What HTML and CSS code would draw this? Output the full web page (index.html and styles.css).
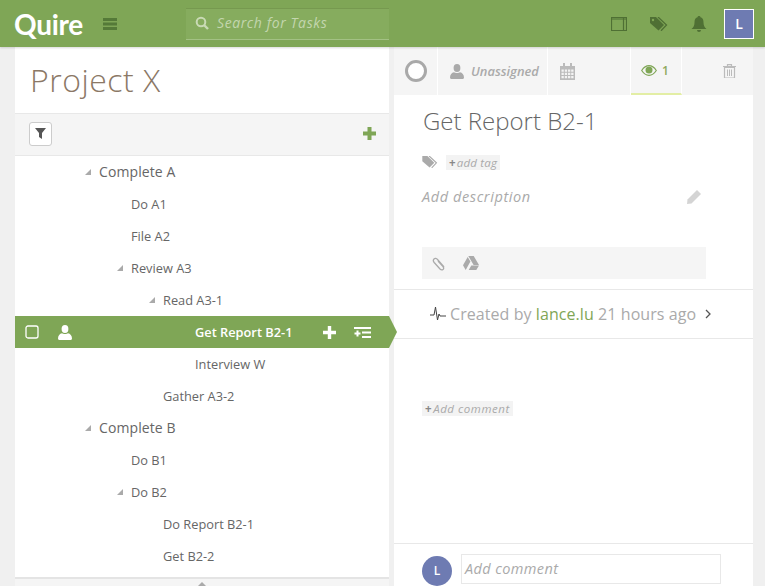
FILE: index.html
```html
<!DOCTYPE html>
<html lang="en">
<head>
  <meta charset="UTF-8">
  <title>Quire - Project X</title>
  <link rel="stylesheet" href="styles.css">
</head>
<body>
  <!-- Top bar -->
  <header class="topbar">
    <div class="logo">Quire</div>
    <svg class="menu-icon" width="14" height="12" viewBox="0 0 14 12"><path d="M0 0h14v3H0zM0 4.500h14v3H0zM0 9h14v3H0z" fill="#557a38"/></svg>
    <div class="search">
      <svg width="14" height="14" viewBox="0 0 14 14"><circle cx="6" cy="6" r="4.300" fill="none" stroke="#c9dab5" stroke-width="2"/><path d="M9 9l4 4" stroke="#c9dab5" stroke-width="2.400"/></svg>
      <span>Search for Tasks</span>
    </div>
    <div class="top-icons">
      <svg width="16" height="14" viewBox="0 0 16 14"><path d="M.5.500h15v13H.5zM12.500.500v13M.5 2h15" fill="none" stroke="#4f7034" stroke-width="1.200"/></svg>
      <svg width="18" height="14" viewBox="0 0 18 14"><path d="M0 0h6l8 8-5.500 5.500L0 6z" fill="#4f7034"/><path d="M8 0l8.500 8-5.500 5.800" fill="none" stroke="#4f7034" stroke-width="1.300"/><circle cx="3" cy="3" r="1.200" fill="#7fa656"/></svg>
      <svg width="16" height="16" viewBox="0 0 16 16"><path d="M8 0c1 0 1.500.6 1.500 1.300C12 2 12.500 4 12.500 6.500c0 3 1 5 3 6.500H.5c2-1.500 3-3.500 3-6.500C3.500 4 4 2 6.500 1.300 6.500.6 7 0 8 0zM6 14h4a2 2 0 0 1-4 0z" fill="#4f7034"/></svg>
      <div class="top-avatar">L</div>
    </div>
  </header>

  <main class="content">
    <!-- Task tree -->
    <section class="tree-panel">
      <h1 class="project-title">Project X</h1>
      <div class="tree-toolbar">
        <button class="filter-btn">
          <svg width="11" height="11" viewBox="0 0 11 11"><path d="M0 0h11L7 5v6L4 9V5z" fill="#555"/></svg>
        </button>
        <svg width="13" height="13" viewBox="0 0 13 13"><path d="M4.500 0h4v4.500H13v4H8.500V13h-4V8.500H0v-4h4.500z" fill="#7fa656"/></svg>
      </div>
      <ul class="tree">
        <li class="row depth-1 open">Complete A</li>
        <li class="row depth-2">Do A1</li>
        <li class="row depth-2">File A2</li>
        <li class="row depth-2 open">Review A3</li>
        <li class="row depth-3 open">Read A3-1</li>
        <li class="row selected">
          <svg class="sel-check" width="14" height="14" viewBox="0 0 14 14"><rect x="1" y="1" width="12" height="12" rx="2" fill="none" stroke="#fff" stroke-width="1.300"/></svg>
          <svg class="sel-user" width="14" height="15" viewBox="0 0 14 15"><ellipse cx="7" cy="4" rx="3.400" ry="4" fill="#fff"/><path d="M0 13.500c0-3 1.800-4.800 4-5.300 1 1 5 1 6 0 2.200.5 4 2.300 4 5.300 0 1-1 1.500-2 1.500H2c-1 0-2-.5-2-1.500z" fill="#fff"/></svg>
          <span class="sel-name">Get Report B2-1</span>
          <svg class="sel-add" width="13" height="13" viewBox="0 0 13 13"><path d="M4.800 0h3.400v4.800H13v3.400H8.200V13H4.800V8.200H0V4.800h4.800z" fill="#fff"/></svg>
          <svg class="sel-sub" width="17" height="11" viewBox="0 0 17 11"><path d="M0 0h17v2H0zM8 4.500h9v2H8zM8 9h9v2H8zM2.500 3.500h2v2h2v2h-2v2h-2v-2h-2v-2h2z" fill="#fff"/></svg>
        </li>
        <li class="row depth-4">Interview W</li>
        <li class="row depth-3">Gather A3-2</li>
        <li class="row depth-1 open">Complete B</li>
        <li class="row depth-2">Do B1</li>
        <li class="row depth-2 open">Do B2</li>
        <li class="row depth-3">Do Report B2-1</li>
        <li class="row depth-3">Get B2-2</li>
      </ul>
      <div class="tree-foot"><span class="foot-arrow"></span></div>
    </section>

    <!-- Task detail -->
    <section class="detail-panel">
      <div class="tabs">
        <div class="tab tab-status"><span class="status-ring"></span></div>
        <div class="tab tab-assign">
          <svg width="14" height="15" viewBox="0 0 14 15"><ellipse cx="7" cy="4" rx="3.400" ry="4" fill="#aaa"/><path d="M0 13.500c0-3 1.800-4.800 4-5.300 1 1 5 1 6 0 2.200.5 4 2.300 4 5.300 0 1-1 1.500-2 1.500H2c-1 0-2-.5-2-1.500z" fill="#aaa"/></svg>
          <span>Unassigned</span>
        </div>
        <div class="tab tab-date">
          <svg width="15" height="17" viewBox="0 0 15 17"><path d="M0 3h15v14H0z" fill="#bbb"/><path d="M3 0h2v4H3zM10 0h2v4h-2z" fill="#bbb"/><path d="M1.500 6.500h2.300v2.300H1.500zM4.800 6.500h2.300v2.300H4.800zM8 6.500h2.300v2.300H8zM11.200 6.500h2.300v2.300h-2.300zM1.500 9.800h2.300v2.300H1.500zM4.800 9.800h2.300v2.300H4.800zM8 9.800h2.300v2.300H8zM11.200 9.800h2.300v2.300h-2.300zM1.500 13h2.300v2.300H1.500zM4.800 13h2.300v2.300H4.800zM8 13h2.300v2.300H8zM11.200 13h2.300v2.300h-2.300z" fill="#f3f3f3"/></svg>
        </div>
        <div class="tab tab-watch">
          <svg width="16" height="11" viewBox="0 0 16 11"><path d="M.7 5.500C3 2 5.300.7 8 .7s5 1.300 7.300 4.800C13 9 10.700 10.300 8 10.300S3 9 .7 5.500z" fill="none" stroke="#7fa656" stroke-width="1.200"/><circle cx="8" cy="5" r="3.500" fill="#7fa656"/></svg>
          <span>1</span>
        </div>
        <div class="tab tab-trash">
          <svg width="13" height="14" viewBox="0 0 13 14"><path d="M0 2.500h13M4.500 2.500V.7h4v1.800" fill="none" stroke="#bbb" stroke-width="1.200"/><path d="M1.500 3.500h10V14h-10z" fill="none" stroke="#bbb" stroke-width="1.200"/><path d="M4 5.500h1V12H4zM6 5.500h1V12H6zM8 5.500h1V12H8z" fill="#bbb"/></svg>
        </div>
      </div>

      <div class="task-info">
        <h2 class="task-title">Get Report B2-1</h2>
        <div class="tag-line">
          <svg width="16" height="12" viewBox="0 0 18 14"><path d="M0 0h6l8 8-5.500 5.500L0 6z" fill="#aaa"/><path d="M8 0l8.500 8-5.500 5.800" fill="none" stroke="#aaa" stroke-width="1.300"/></svg>
          <span class="chip"><b>+</b>add tag</span>
        </div>
        <div class="desc-line">
          <span>Add description</span>
          <svg width="14" height="14" viewBox="0 0 14 14"><path d="M10 0l4 4-9.500 9.500L0 14l.5-4.500z" fill="#d4d4d4"/></svg>
        </div>
        <div class="attach-box">
          <svg width="14" height="15" viewBox="0 0 14 15"><path d="M12 11L5.500 3.500C4.500 2.300 3 2 2 3s-.8 2.300.2 3.500L8 13c1 1 2 1.200 3 .5s.8-2 0-3L6 5" fill="none" stroke="#aaa" stroke-width="1.300"/></svg>
          <svg width="16" height="14" viewBox="0 0 16 14"><path d="M5.300 0h5.400L16 9h-5.400zM4.700 1l2.700 4.500L2.700 14 0 9.300zM8.300 9.500H16L13.300 14H5.700z" fill="#aaa"/></svg>
        </div>
      </div>

      <div class="activity">
        <svg width="16" height="16" viewBox="0 0 16 16"><path d="M0 9h4l1.500-8 2 13 1.500-6 1 2h6" fill="none" stroke="#444" stroke-width="1"/></svg>
        <span class="activity-text">Created by <a class="user-link">lance.lu</a> 21 hours ago</span>
        <svg class="chevron" width="6" height="10" viewBox="0 0 6 10"><path d="M1 1l4 4-4 4" fill="none" stroke="#555" stroke-width="1.300"/></svg>
      </div>

      <div class="comments">
        <span class="chip comment-chip"><b>+</b>Add comment</span>
      </div>

      <div class="comment-box">
        <div class="round-avatar">L</div>
        <div class="comment-input">Add comment</div>
      </div>
    </section>
  </main>
</body>
</html>
```

FILE: styles.css
```css
html, body {
  margin: 0;
  height: 100%;
}

body {
  font-family: "Open Sans", sans-serif;
  background-color: #f0f0f0;
  color: #666;
  overflow: hidden;
}

.topbar {
  height: 47px;
  background-color: #7fa656;
  display: flex;
  align-items: center;
  box-shadow: 0 1px 2px rgba(0, 0, 0, 0.15);
  position: relative;
  z-index: 2;
}

.logo {
  font-family: Lato, sans-serif;
  font-weight: 700;
  font-size: 28px;
  color: #fff;
  margin-left: 14px;
  width: 89px;
  letter-spacing: -0.3px;
}

.menu-icon {
  flex: none;
}

.search {
  margin-left: 69px;
  width: 203px;
  height: 32px;
  box-sizing: border-box;
  padding: 0 0 2px 9px;
  display: flex;
  align-items: center;
  gap: 8px;
  background-color: #86ac5e;
  border-bottom: 1px solid #a3c184;
  border-top: 1px solid #76994f;
  font-size: 14px;
  font-style: italic;
  color: #c3d6ae;
  letter-spacing: 0.6px;
}

.top-icons {
  margin-left: auto;
  margin-right: 11px;
  display: flex;
  align-items: center;
}

.top-icons svg:nth-child(1) { margin-right: 23px; }
.top-icons svg:nth-child(2) { margin-right: 23px; }
.top-icons svg:nth-child(3) { margin-right: 17px; }

.top-avatar {
  width: 30px;
  height: 30px;
  box-sizing: border-box;
  border: 1px solid #fff;
  background-color: #6e7bb2;
  color: #fff;
  font-size: 14px;
  font-weight: 600;
  display: flex;
  align-items: center;
  justify-content: center;
}

.content {
  display: flex;
  height: 539px;
}

/* left panel */
.tree-panel {
  width: 374px;
  margin-left: 15px;
  background-color: #fff;
  display: flex;
  flex-direction: column;
  flex: none;
}

.project-title {
  margin: 0;
  height: 66px;
  box-sizing: border-box;
  padding: 11px 0 0 15px;
  font-size: 32px;
  line-height: 44px;
  font-weight: 300;
  color: #8b7866;
  letter-spacing: 0.5px;
}

.tree-toolbar {
  height: 43px;
  box-sizing: border-box;
  background-color: #f5f5f5;
  border-top: 1px solid #e8e8e8;
  border-bottom: 1px solid #e8e8e8;
  display: flex;
  align-items: center;
  justify-content: space-between;
  padding: 0 13px 2px 14px;
}

.filter-btn {
  width: 23px;
  height: 24px;
  padding: 0;
  background-color: #fff;
  border: 1px solid #ccc;
  border-radius: 3px;
  display: flex;
  align-items: center;
  justify-content: center;
}

.tree {
  list-style: none;
  margin: 0;
  padding: 0;
  flex: 1;
}

.row {
  height: 32px;
  line-height: 32px;
  font-size: 12.8px;
  color: #666;
  position: relative;
}

.depth-1 { padding-left: 84px; font-size: 14px; letter-spacing: 0.1px; }
.depth-2 { padding-left: 116px; }
.depth-3 { padding-left: 148px; }
.depth-4 { padding-left: 180px; }

.row.open::before {
  content: "";
  position: absolute;
  margin-left: -14px;
  top: 13px;
  border-style: solid;
  border-width: 0 0 6px 6px;
  border-color: transparent transparent #aaa transparent;
}

.selected {
  background-color: #7fa656;
  color: #fff;
  font-weight: 600;
  display: flex;
  align-items: center;
  margin-right: 0;
}

/* arrow pointing at the detail panel */
.selected::after {
  content: "";
  position: absolute;
  left: 100%;
  top: 0;
  border-style: solid;
  border-width: 16px 0 16px 8px;
  border-color: transparent transparent transparent #7fa656;
}

.sel-check { margin-left: 10px; }
.sel-user { margin-left: 19px; }
.sel-name { margin-left: 123px; }
.sel-add { margin-left: auto; }
.sel-sub { margin-left: 18px; margin-right: 18px; }

.tree-foot {
  height: 9px;
  box-sizing: border-box;
  background-color: #f5f5f5;
  border-top: 2px solid #e4e4e4;
  position: relative;
  overflow: hidden;
  margin-right: 0;
}

.foot-arrow {
  position: absolute;
  left: 183px;
  top: 3px;
  border-style: solid;
  border-width: 0 4px 4px 4px;
  border-color: transparent transparent #aaa transparent;
}

/* right panel */
.detail-panel {
  width: 359px;
  margin-left: 5px;
  background-color: #fff;
  display: flex;
  flex-direction: column;
  flex: none;
}

.tabs {
  height: 48px;
  display: flex;
  background-color: #f5f5f5;
  flex: none;
}

.tab {
  box-sizing: border-box;
  height: 48px;
  display: flex;
  align-items: center;
  border-right: 1px solid #fff;
}

.tab-status { width: 44px; padding-left: 11px; }
.tab-assign {
  width: 110px;
  padding-left: 13px;
  gap: 6px;
  font-size: 12.9px;
  font-weight: 600;
  font-style: italic;
  color: #aaa;
}
.tab-assign svg { margin-left: -1px; margin-right: 1px; }
.tab-date { width: 83px; padding-left: 12px; }
.tab-watch {
  width: 51px;
  padding-left: 10px;
  gap: 5px;
  font-size: 12px;
  font-weight: 600;
  color: #8fa95c;
  border-bottom: 2px solid #e3eea5;
}
.tab-trash {
  flex: 1;
  border-right: none;
  justify-content: flex-end;
  padding-right: 17px;
}

.status-ring {
  width: 22px;
  height: 22px;
  box-sizing: border-box;
  border: 3px solid #a9a9a9;
  border-radius: 50%;
  background-color: #fff;
}

.task-info {
  height: 195px;
  box-sizing: border-box;
  padding: 8px 47px 0 28px;
  border-bottom: 1px solid #e8e8e8;
  flex: none;
}

.task-title {
  margin: 0 0 0 1px;
  font-size: 24px;
  line-height: 36px;
  font-weight: 300;
  color: #666;
}

.tag-line {
  margin-top: 15px;
  height: 16px;
  display: flex;
  align-items: center;
  gap: 8px;
}

.chip {
  background-color: #f3f3f3;
  font-size: 11.5px;
  line-height: 15px;
  font-style: italic;
  color: #aaa;
  padding: 0 3px 0 3px;
  letter-spacing: 0.2px;
}

.chip b {
  font-style: normal;
  color: #888;
  margin-right: 1px;
}

.desc-line {
  margin-top: 17px;
  margin-right: 5px;
  display: flex;
  justify-content: space-between;
  align-items: center;
  font-size: 14.5px;
  line-height: 20px;
  font-style: italic;
  color: #aaa;
  letter-spacing: 0.6px;
}

.attach-box {
  margin-top: 40px;
  height: 32px;
  background-color: #f5f5f5;
  display: flex;
  align-items: center;
  gap: 17px;
  padding-left: 10px;
}

.activity {
  height: 49px;
  box-sizing: border-box;
  border-bottom: 1px solid #e8e8e8;
  display: flex;
  align-items: center;
  padding-left: 36px;
  gap: 4px;
  font-size: 16px;
  color: #aaa;
  letter-spacing: 0.07px;
  flex: none;
}

.user-link {
  color: #7fa656;
}

.chevron {
  margin-left: 5px;
}

.comments {
  flex: 1;
  padding: 57px 0 0 28px;
}

.comment-chip {
  display: inline-block;
  letter-spacing: 0.55px;
}

.comment-box {
  height: 43px;
  box-sizing: border-box;
  border-top: 1px solid #e8e8e8;
  display: flex;
  padding: 10px 32px 0 28px;
  gap: 9px;
  flex: none;
}

.round-avatar {
  width: 30px;
  height: 30px;
  margin-top: 2px;
  border-radius: 50%;
  background-color: #6e7bb2;
  color: #fff;
  font-size: 12px;
  font-weight: 600;
  text-align: center;
  line-height: 30px;
  flex: none;
}

.comment-input {
  flex: 1;
  height: 30px;
  box-sizing: border-box;
  border: 1px solid #e8e8e8;
  padding-left: 3px;
  font-size: 14.5px;
  line-height: 28px;
  font-style: italic;
  color: #aaa;
  letter-spacing: 0.4px;
}
```
